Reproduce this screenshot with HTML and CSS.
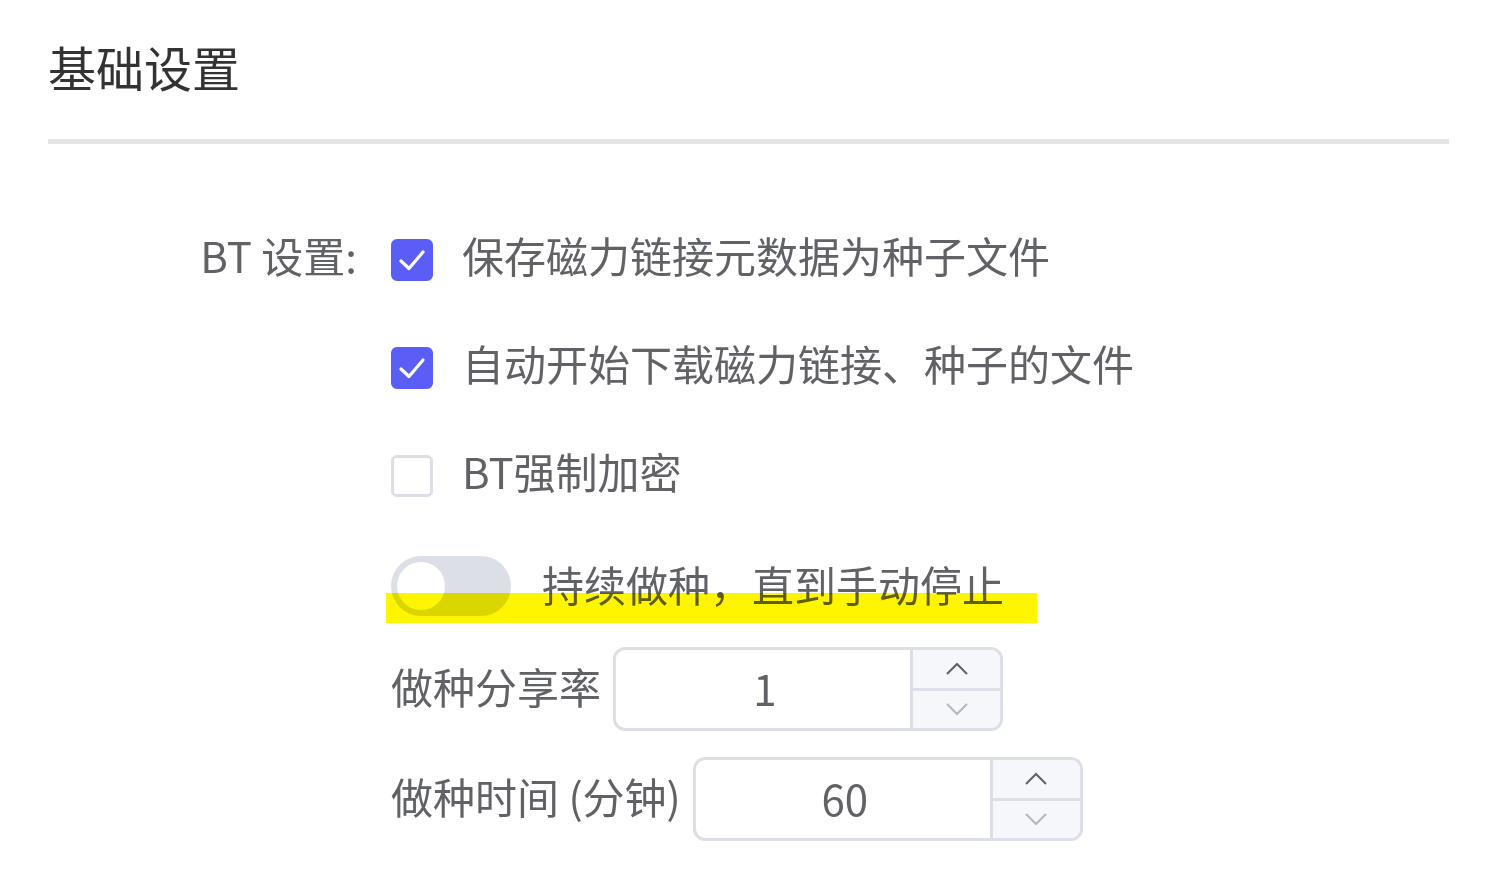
FILE: index.html
```html
<!DOCTYPE html>
<html lang="zh-CN">
<head>
<meta charset="utf-8">
<title>基础设置</title>
<link rel="stylesheet" href="styles.css">
</head>
<body>
<div class="page">
  <h1 class="title">基础设置</h1>
  <div class="divider"></div>
  <div class="form-row">
    <div class="form-label">BT 设置:</div>
    <div class="form-content">
      <label class="check-row">
        <span class="checkbox checked"><svg viewBox="0 0 42 42" width="42" height="42"><polyline points="10,22 18,29.5 32,13" fill="none" stroke="#fff" stroke-width="3.2" stroke-linecap="round" stroke-linejoin="round"/></svg></span>
        <span class="check-text">保存磁力链接元数据为种子文件</span>
      </label>
      <label class="check-row">
        <span class="checkbox checked"><svg viewBox="0 0 42 42" width="42" height="42"><polyline points="10,22 18,29.5 32,13" fill="none" stroke="#fff" stroke-width="3.2" stroke-linecap="round" stroke-linejoin="round"/></svg></span>
        <span class="check-text">自动开始下载磁力链接、种子的文件</span>
      </label>
      <label class="check-row">
        <span class="checkbox"></span>
        <span class="check-text">BT强制加密</span>
      </label>
      <div class="switch-row">
        <span class="switch"><span class="switch-knob"></span></span>
        <span class="switch-text">持续做种，直到手动停止</span>
        <span class="highlight"></span>
      </div>
      <div class="num-row first">
        <span class="num-label">做种分享率</span>
        <div class="num-input">
          <div class="num-value">1</div>
          <div class="spinner">
            <div class="spin up"><svg viewBox="0 0 24 14" width="24" height="14"><polyline points="2,12 12,2 22,12" fill="none" stroke="#606266" stroke-width="2"/></svg></div>
            <div class="spin down"><svg viewBox="0 0 24 14" width="24" height="14"><polyline points="2,2 12,12 22,2" fill="none" stroke="#b4b7bd" stroke-width="2"/></svg></div>
          </div>
        </div>
      </div>
      <div class="num-row second">
        <span class="num-label">做种时间 (分钟)</span>
        <div class="num-input">
          <div class="num-value">60</div>
          <div class="spinner">
            <div class="spin up"><svg viewBox="0 0 24 14" width="24" height="14"><polyline points="2,12 12,2 22,12" fill="none" stroke="#606266" stroke-width="2"/></svg></div>
            <div class="spin down"><svg viewBox="0 0 24 14" width="24" height="14"><polyline points="2,2 12,12 22,2" fill="none" stroke="#b4b7bd" stroke-width="2"/></svg></div>
          </div>
        </div>
      </div>
    </div>
  </div>
</div>
</body>
</html>
```
FILE: styles.css
```css
* { box-sizing: border-box; }
html, body { margin: 0; padding: 0; background: #fff; }
body {
  font-family: "Noto Sans CJK SC", "Noto Sans", sans-serif;
  color: #606266;
}
.page {
  padding: 0 59px 0 48px;
}
.title {
  margin: 42px 0 0 0;
  font-size: 48px;
  line-height: 48px;
  font-weight: 400;
  color: #333333;
}
.divider {
  margin-top: 49px;
  height: 5px;
  background: #e4e4e4;
}
.form-row {
  display: flex;
  margin-top: 95px;
}
.form-label {
  width: 343px;
  padding-right: 34px;
  text-align: right;
  font-size: 42px;
  line-height: 32px;
  height: 42px;
  color: #606266;
  white-space: nowrap;
}
.form-content {
  display: flex;
  flex-direction: column;
}
.check-row {
  display: flex;
  align-items: center;
  height: 42px;
  margin-bottom: 66px;
}
.check-row:nth-child(3) { margin-bottom: 59px; }
.checkbox {
  width: 42px;
  height: 42px;
  border-radius: 6px;
  border: 3px solid #dcdfe6;
  background: #fff;
  flex: none;
  position: relative;
}
.checkbox.checked {
  background: #5a5ef7;
  border-color: #5a5ef7;
}
.checkbox svg {
  display: block;
  margin: -3px;
}
.check-text {
  margin-left: 29px;
  margin-bottom: 10px;
  font-size: 42px;
  line-height: 42px;
  white-space: nowrap;
}
.switch-row {
  position: relative;
  display: flex;
  align-items: center;
  height: 60px;
}
.switch {
  width: 120px;
  height: 60px;
  border-radius: 30px;
  background: #dcdfe6;
  padding: 6px;
  flex: none;
}
.switch-knob {
  display: block;
  width: 48px;
  height: 48px;
  border-radius: 50%;
  background: #fff;
}
.switch-text {
  margin-left: 31px;
  margin-bottom: 4px;
  font-size: 42px;
  line-height: 42px;
  white-space: nowrap;
}
.highlight {
  position: absolute;
  left: -5px;
  top: 37px;
  width: 651px;
  height: 30px;
  background: #fff500;
  mix-blend-mode: multiply;
}
.num-row {
  display: flex;
  align-items: center;
}
.num-row.first { margin-top: 31px; }
.num-row.second { margin-top: 26px; }
.num-label {
  font-size: 42px;
  line-height: 42px;
  margin-right: 12px;
  margin-bottom: 6px;
  white-space: nowrap;
}
.num-input {
  display: flex;
  width: 390px;
  height: 84px;
  border: 3px solid #dcdfe6;
  border-radius: 12px;
  overflow: hidden;
  background: #fff;
}
.num-value {
  flex: 1;
  display: flex;
  align-items: center;
  justify-content: center;
  padding-left: 4px;
  padding-bottom: 4px;
  font-size: 42px;
  color: #606266;
}
.spinner {
  width: 90px;
  border-left: 3px solid #dcdfe6;
  display: flex;
  flex-direction: column;
  background: #f5f7fa;
}
.spin {
  flex: 1;
  display: flex;
  align-items: center;
  justify-content: center;
}
.spin.up { border-bottom: 3px solid #dcdfe6; }
.spin svg { display: block; }
```
